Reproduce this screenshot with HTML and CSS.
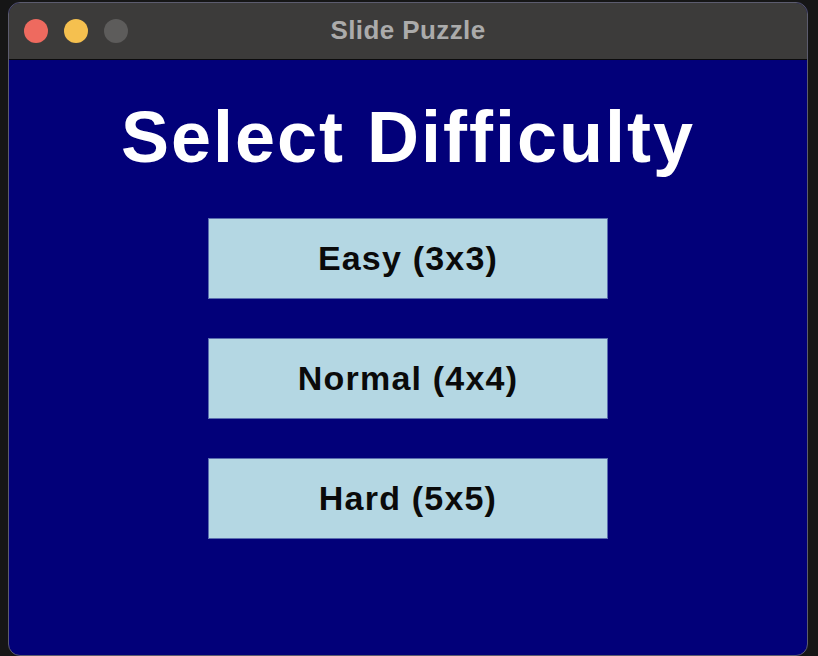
FILE: index.html
```html
<!DOCTYPE html>
<html lang="en">
<head>
    <meta charset="UTF-8">
    <title>Slide Puzzle</title>
    <link rel="stylesheet" href="styles.css">
</head>
<body>
    <div class="window">
        <div class="titlebar">
            <div class="lights">
                <span class="light red"></span>
                <span class="light yellow"></span>
                <span class="light gray"></span>
            </div>
            <div class="window-title">Slide Puzzle</div>
        </div>
        <div class="screen">
            <h1 class="heading">Select Difficulty</h1>
            <div class="menu">
                <button class="level">Easy (3x3)</button>
                <button class="level">Normal (4x4)</button>
                <button class="level">Hard (5x5)</button>
            </div>
        </div>
    </div>
</body>
</html>
```
FILE: styles.css
```css
html, body {
    margin: 0;
    padding: 0;
    height: 100%;
    overflow: hidden;
}
body {
    background-color: #161616;
    font-family: 'Liberation Sans', Arial, sans-serif;
}
.window {
    box-sizing: border-box;
    margin: 2px 0 0 8px;
    width: 800px;
    height: 654px;
    border: 1px solid #5c5c6e;
    border-radius: 12px;
    overflow: hidden;
    display: flex;
    flex-direction: column;
    background-color: #020079;
}
.titlebar {
    position: relative;
    height: 56px;
    flex-shrink: 0;
    background-color: #3c3b3a;
    border-bottom: 1px solid #0b0b0b;
    display: flex;
    align-items: center;
}
.lights {
    display: flex;
    gap: 16px;
    padding-left: 15px;
    margin-top: -1px;
}
.light {
    width: 24px;
    height: 24px;
    border-radius: 50%;
}
.light.red { background-color: #ee6a5f; }
.light.yellow { background-color: #f5c04f; }
.light.gray { background-color: #5d5c5b; }
.window-title {
    position: absolute;
    left: 0;
    right: 0;
    top: 0;
    bottom: 0;
    display: flex;
    justify-content: center;
    align-items: center;
    color: #ababab;
    font-size: 26px;
    font-weight: bold;
    letter-spacing: 0.4px;
    margin-top: -2px;
}
.screen {
    flex: 1;
    display: flex;
    flex-direction: column;
    align-items: center;
    padding-top: 41px;
}
.heading {
    margin: 0;
    color: #fff;
    font-size: 72px;
    line-height: 1;
    font-weight: bold;
    letter-spacing: 2px;
}
.menu {
    display: flex;
    flex-direction: column;
    gap: 39px;
    margin-top: 45px;
}
.level {
    box-sizing: border-box;
    width: 400px;
    height: 81px;
    margin: 0;
    padding: 0;
    background-color: #b4d7e3;
    border: 1px solid #5a6db0;
    color: #0a0a0a;
    font-family: 'Liberation Sans', Arial, sans-serif;
    font-size: 34px;
    font-weight: bold;
    letter-spacing: 1.2px;
    cursor: pointer;
}
```
